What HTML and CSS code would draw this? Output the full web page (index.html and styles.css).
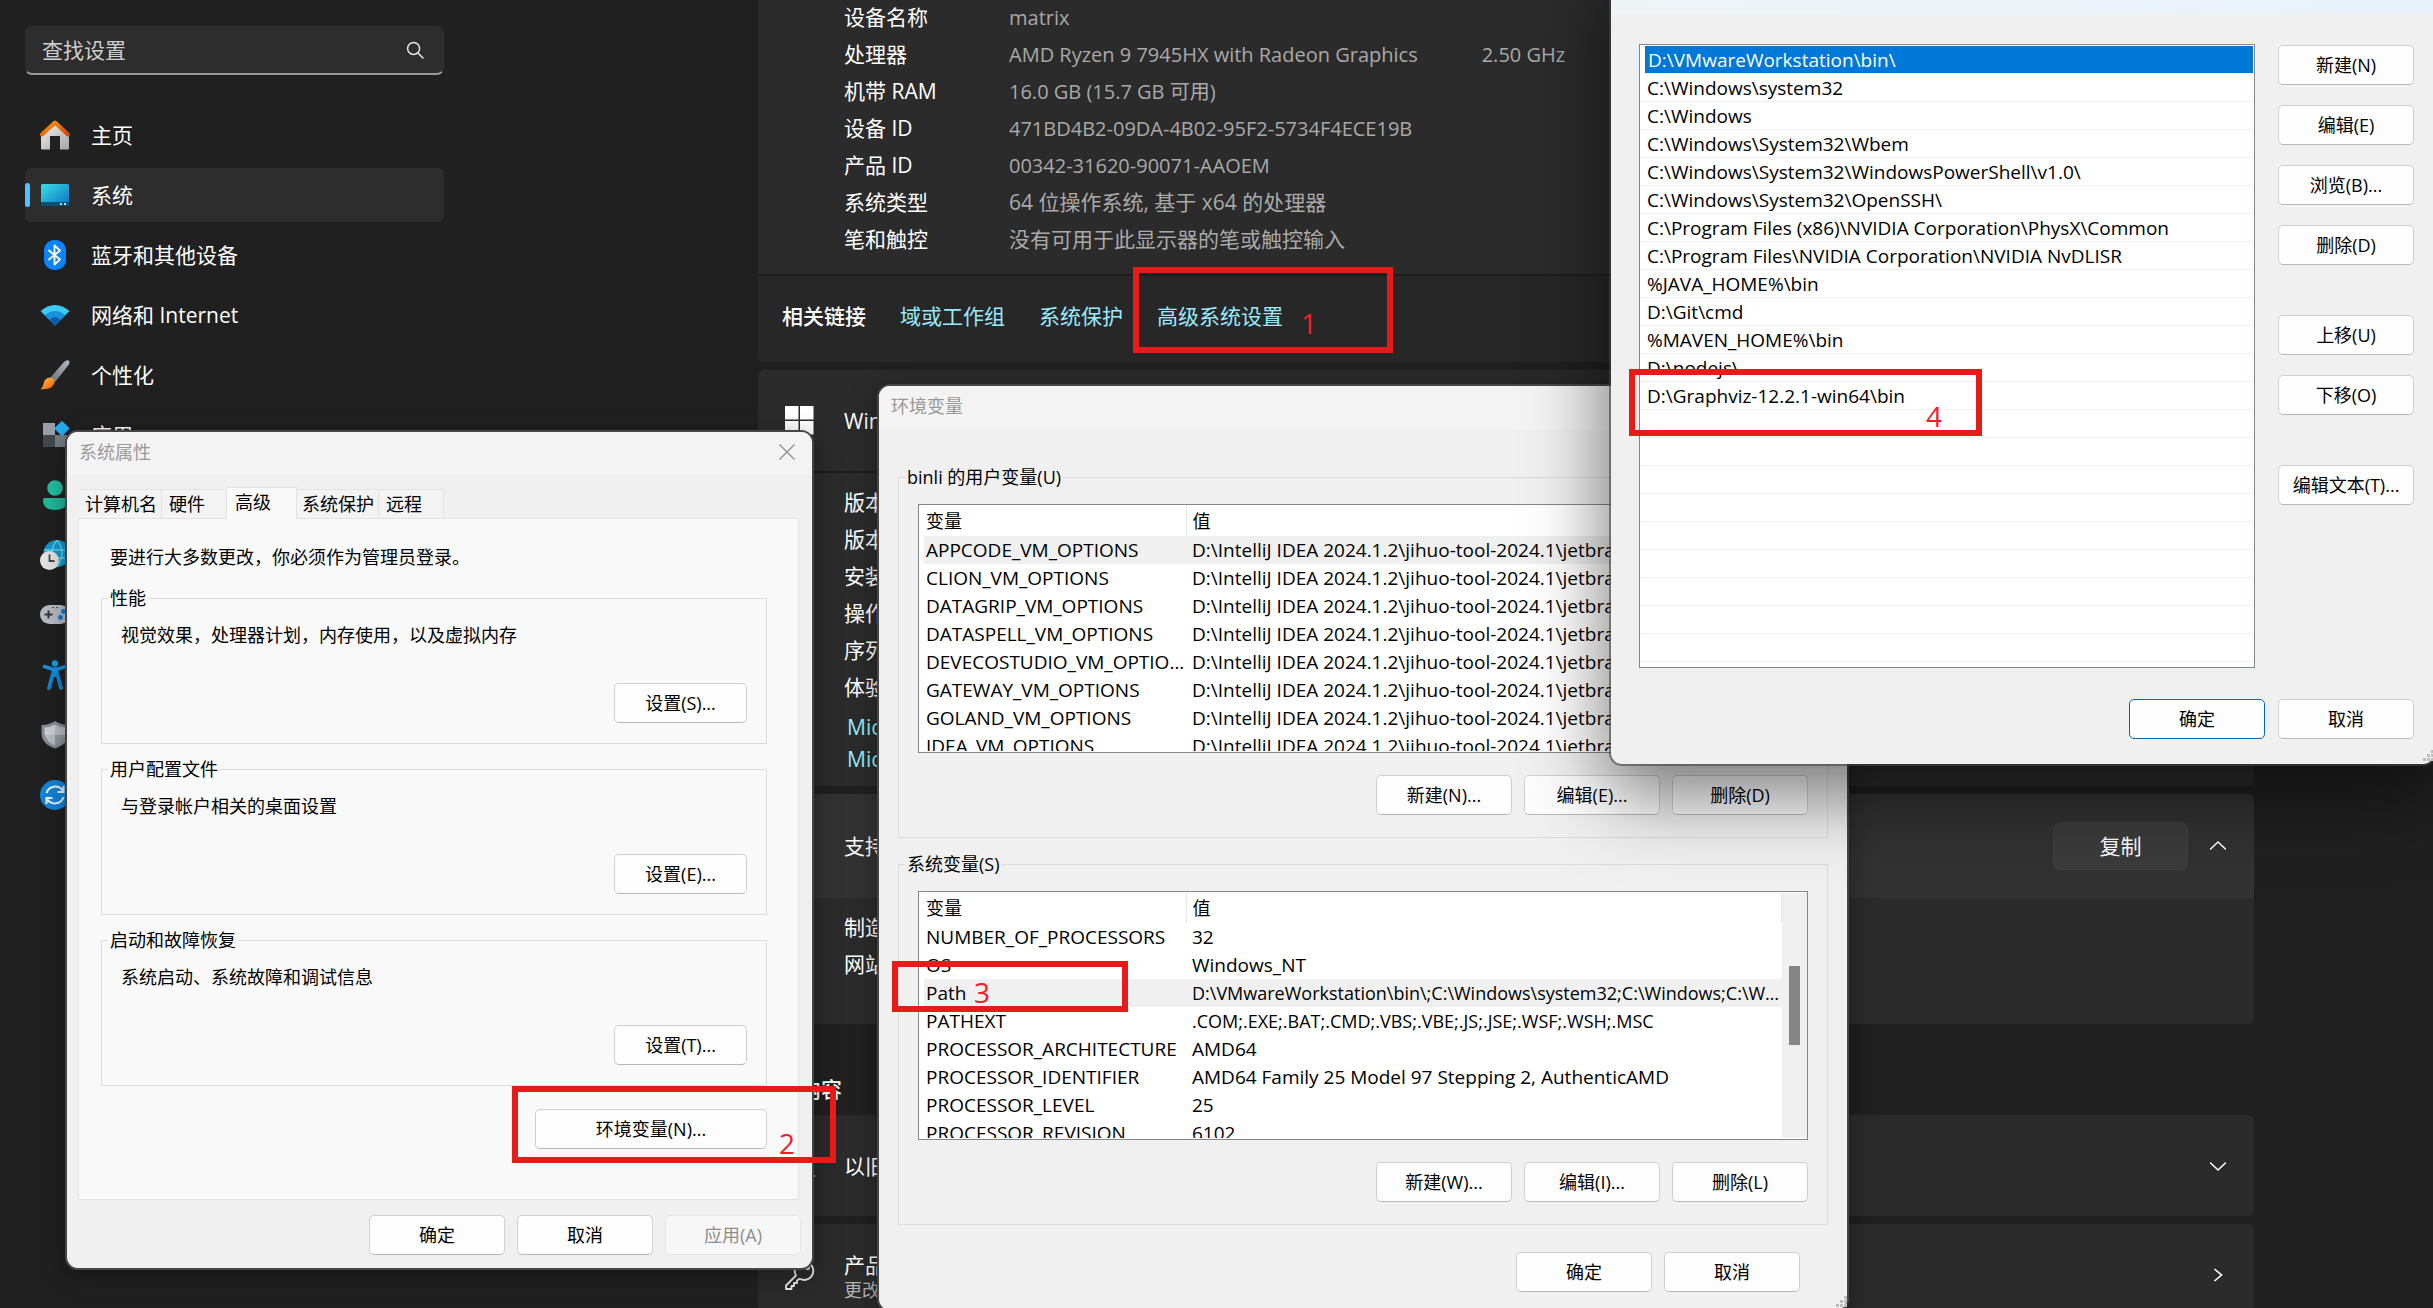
FILE: index.html
```html
<!DOCTYPE html>
<html lang="zh-CN">
<head>
<meta charset="utf-8">
<title>系统 - 关于</title>
<link rel="stylesheet" href="styles.css">
</head>
<body>
<div class="settings">
  <aside class="sidebar">
    <div class="search">
      <input type="search" placeholder="查找设置" aria-label="查找设置">
      <svg width="18" height="18" viewBox="0 0 18 18" fill="none" stroke="#e6e6e6" stroke-width="1.5" stroke-linecap="round"><circle cx="7.6" cy="7.4" r="6"/><path d="M12 12l5 5"/></svg>
    </div>
    <nav class="nav">
      <a href="#" class="nav-item"><svg class="icon" viewBox="0 0 30 30"><defs><linearGradient id="roof" x1="0" y1="0" x2="1" y2="1"><stop offset="0" stop-color="#ff9b0c"/><stop offset="1" stop-color="#d44505"/></linearGradient><linearGradient id="wall" x1="0" y1="0" x2="1" y2="1"><stop offset="0" stop-color="#efefef"/><stop offset="1" stop-color="#a5a5a5"/></linearGradient></defs><path fill="url(#wall)" d="M15 5L29 16v12.500q0 1-1 1h-8V16H10v13.500H2q-1 0-1-1V16z"/><path fill="none" stroke="url(#roof)" stroke-width="4" stroke-linecap="round" stroke-linejoin="round" d="M2 14.500L15 2.500l13 12"/></svg>主页</a>
      <a href="#" class="nav-item selected" aria-current="page"><svg class="icon" viewBox="0 0 30 30"><defs><linearGradient id="scr" x1="0" y1="0" x2="1" y2="1"><stop offset="0" stop-color="#3be0e6"/><stop offset="1" stop-color="#0a6fc4"/></linearGradient></defs><rect x="1" y="4" width="28" height="22" rx="1.500" fill="url(#scr)"/><path d="M1 22h28v2.500q0 1.500-1.500 1.500h-25Q1 26 1 24.500z" fill="#0b4f73"/><path d="M20 23h2v2h-2zM24 23h2v2h-2z" fill="#b9dcec"/></svg>系统</a>
      <a href="#" class="nav-item"><svg class="icon" viewBox="0 0 30 30"><rect x="4" y="0" width="22" height="30" rx="10" fill="#0a84ff"/><path d="M9 10.500l11 9-5.500 5V5.500l5.500 5-11 9" fill="none" stroke="#fff" stroke-width="1.800" stroke-linejoin="round" stroke-linecap="round"/></svg>蓝牙和其他设备</a>
      <a href="#" class="nav-item"><svg class="icon" viewBox="0 0 30 30"><path d="M.5 11Q15-1 29.500 11L15 25.500z" fill="#3ccbf4"/><path d="M4.800 15.300Q15 6.500 25.200 15.300L15 25.500z" fill="#1590df"/><path d="M9.400 19.900Q15 14 20.600 19.900L15 25.500z" fill="#0f5aa6"/></svg>网络和 Internet</a>
      <a href="#" class="nav-item"><svg class="icon" viewBox="0 0 30 30"><defs><linearGradient id="hnd" x1="0" y1="1" x2="1" y2="0"><stop offset="0" stop-color="#69727b"/><stop offset="1" stop-color="#b4bac1"/></linearGradient><linearGradient id="tip" x1="0" y1="0" x2="1" y2="1"><stop offset="0" stop-color="#ffc43a"/><stop offset="1" stop-color="#f05a14"/></linearGradient></defs><path d="M10 18L24 2q2.500-2.500 4.500-1.500Q30.500 2 28.500 5L15 22z" fill="url(#hnd)"/><path d="M10 17.500q5 .5 4.500 5Q13 30 .5 29.200 3 27.500 3.500 24 4.500 18 10 17.500z" fill="url(#tip)"/></svg>个性化</a>
      <a href="#" class="nav-item"><svg class="icon" viewBox="0 0 30 30"><rect x="3" y="3" width="12" height="12" fill="#9aa1a9"/><rect x="3" y="15" width="12" height="12" fill="#45494d"/><rect x="15" y="15" width="12" height="12" fill="#747c85"/><rect x="16.500" y="3" width="11" height="11" rx="1" fill="#26aef2" transform="rotate(45 22 8.500)"/></svg>应用</a>
      <a href="#" class="nav-item"><svg class="icon" viewBox="0 0 30 30"><circle cx="15" cy="8" r="7.800" fill="#22c0a3"/><path d="M5 18h20q2 0 2 2 0 10-12 10T3 20q0-2 2-2z" fill="#1fb89c"/></svg>帐户</a>
      <a href="#" class="nav-item"><svg class="icon" viewBox="0 0 30 30"><circle cx="17" cy="13.500" r="13.500" fill="#1797cf"/><path d="M4 10h26M4 18h26M17 0q-10 13 0 27M17 0q10 13 0 27" stroke="#5bdcf0" stroke-width="1.300" fill="none"/><circle cx="9.500" cy="20.500" r="9.500" fill="#e4e4e4"/><path d="M9.500 14.500v6.500h5" stroke="#444" stroke-width="1.800" fill="none"/></svg>时间和语言</a>
      <a href="#" class="nav-item"><svg class="icon" viewBox="0 0 30 30"><rect x="0" y="5" width="30" height="19" rx="9.500" fill="#b7bcc3"/><path d="M8.500 10.500v8M4.500 14.500h8" stroke="#34383c" stroke-width="2"/><circle cx="23.500" cy="11.500" r="2.400" fill="#0a78d4"/><circle cx="20.500" cy="17.500" r="2.400" fill="#0a78d4"/><path d="M12 7.500h2M16 7.500h2" stroke="#555" stroke-width="1.200"/></svg>游戏</a>
      <a href="#" class="nav-item"><svg class="icon" viewBox="0 0 30 30"><circle cx="15" cy="3.500" r="3.200" fill="#189be6"/><path d="M4.500 6.500L12 9h6l7.500-2.500" stroke="#1590df" stroke-width="3.600" stroke-linecap="round" fill="none"/><path d="M11.500 8h7v9h-7z" fill="#1590df"/><path d="M12.500 15L9 28M17.500 15L21 28" stroke="#0f86d8" stroke-width="3.800" stroke-linecap="round" fill="none"/></svg>辅助功能</a>
      <a href="#" class="nav-item"><svg class="icon" viewBox="0 0 30 30"><path d="M15 1q6 4 13.500 4v8Q28.500 24 15 28.500 1.500 24 1.500 13V5Q9 5 15 1z" fill="#868c94"/><path d="M15 4.500q5 3 10.500 3V15H15z" fill="#b8bdc3"/><path d="M15 4.500q-5 3-10.500 3V15H15z" fill="#ccd0d5"/><path d="M15 15H4.800Q6.500 22 15 25.500z" fill="#b8bdc3"/><path d="M15 15h10.200Q23.500 22 15 25.500z" fill="#9299a1"/></svg>隐私和安全性</a>
      <a href="#" class="nav-item"><svg class="icon" viewBox="0 0 30 30"><circle cx="15" cy="15" r="15" fill="#1384da"/><path d="M6.500 13a9 9 0 0 1 16-2.500M23.500 17a9 9 0 0 1-16 2.500M23.500 6v6h-6M6.500 24v-6h6" stroke="#eaf4fb" stroke-width="2" fill="none"/></svg>Windows 更新</a>
    </nav>
  </aside>

  <main class="content">
    <section class="card open-top">
      <dl class="specs device">
        <dt>设备名称</dt><dd>matrix</dd>
        <dt>处理器</dt><dd>AMD Ryzen 9 7945HX with Radeon Graphics<span class="clock">2.50 GHz</span></dd>
        <dt>机带 RAM</dt><dd>16.0 GB (15.7 GB 可用)</dd>
        <dt>设备 ID</dt><dd>471BD4B2-09DA-4B02-95F2-5734F4ECE19B</dd>
        <dt>产品 ID</dt><dd>00342-31620-90071-AAOEM</dd>
        <dt>系统类型</dt><dd class="han">64 位操作系统, 基于 x64 的处理器</dd>
        <dt>笔和触控</dt><dd class="han">没有可用于此显示器的笔或触控输入</dd>
      </dl>
      <div class="related">
        <strong>相关链接</strong>
        <a href="#">域或工作组</a>
        <a href="#">系统保护</a>
        <a href="#">高级系统设置</a>
      </div>
    </section>

    <section class="card">
      <header class="card-head">
        <svg class="icon" viewBox="0 0 30 30" fill="#fff"><path d="M0 0h13.500v13.500H0zM15 0h13.500v13.500H15zM0 15h13.500v13.500H0zM15 15h13.500v13.500H15z"/></svg>
        <span>Windows 规格</span>
      </header>
      <div class="card-body">
        <dl class="specs">
          <dt>版本</dt><dd></dd>
          <dt>版本号</dt><dd></dd>
          <dt>安装日期</dt><dd></dd>
          <dt>操作系统版本</dt><dd></dd>
          <dt>序列号</dt><dd></dd>
          <dt>体验</dt><dd></dd>
        </dl>
        <div class="terms">
          <a href="#">Microsoft 服务协议</a>
          <a href="#">Microsoft 软件许可条款</a>
        </div>
      </div>
    </section>

    <section class="card">
      <header class="card-head raised">
        <svg class="icon" viewBox="0 0 30 30" fill="none" stroke="#eee" stroke-width="1.600"><circle cx="14" cy="15" r="13"/><path d="M10 11q0-4 4-4t4 4q0 2-2 3.500T14 18M14 21v2"/></svg>
        <span class="grow">支持</span>
        <button type="button" class="copy">复制</button>
        <svg class="chevron" viewBox="0 0 16 16"><path d="M0 11.500L8 4l8 7.500"/></svg>
      </header>
      <div class="card-body support">
        <dl class="specs">
          <dt>制造商</dt><dd></dd>
          <dt>网站</dt><dd></dd>
        </dl>
      </div>
    </section>

    <h2 class="heading">相关内容</h2>

    <section class="card card-head">
      <svg class="icon" viewBox="0 0 30 30" fill="none" stroke="#eee" stroke-width="1.600"><path d="M4 6h20v14H4zM1 25h29"/></svg>
      <span class="grow">以旧换新或回收电脑</span>
      <svg class="chevron" viewBox="0 0 16 16"><path d="M0 4.500L8 12l8-7.500"/></svg>
    </section>
    <section class="card card-head">
      <svg class="icon" viewBox="0 0 30 30" fill="none" stroke="#eee" stroke-width="1.800" stroke-linejoin="round"><path d="M11 15.500L1 25.500V29h5.500v-3H9v-3h3v-2.500l2.500-1.700Q17 20 20 20a9.300 9.300 0 1 0-9-4.500z"/><circle cx="22.500" cy="7.500" r="1.600"/></svg>
      <span class="grow">产品密钥和激活<small>更改产品密钥或升级 Windows</small></span>
      <svg class="chevron" viewBox="0 0 16 16"><path d="M4.500 2l7 6-7 6"/></svg>
    </section>
  </main>
</div>

<section class="window props" aria-label="系统属性">
  <header class="titlebar">
    <span>系统属性</span>
    <button type="button" class="close" aria-label="关闭"><svg width="16" height="16" viewBox="0 0 16 16" stroke="#8e8e8e" stroke-width="1.300"><path d="M.5.5l15 15M15.500.5l-15 15"/></svg></button>
  </header>
  <div class="props-body">
    <div class="tabs">
      <button type="button" class="tab wide">计算机名</button>
      <button type="button" class="tab">硬件</button>
      <button type="button" class="tab active">高级</button>
      <button type="button" class="tab wide">系统保护</button>
      <button type="button" class="tab">远程</button>
    </div>
    <div class="sheet">
      <p class="note">要进行大多数更改，你必须作为管理员登录。</p>
      <fieldset class="group">
        <legend>性能</legend>
        <div class="option"><p>视觉效果，处理器计划，内存使用，以及虚拟内存</p><button type="button" class="btn">设置(S)...</button></div>
      </fieldset>
      <fieldset class="group">
        <legend>用户配置文件</legend>
        <div class="option"><p>与登录帐户相关的桌面设置</p><button type="button" class="btn">设置(E)...</button></div>
      </fieldset>
      <fieldset class="group">
        <legend>启动和故障恢复</legend>
        <div class="option"><p>系统启动、系统故障和调试信息</p><button type="button" class="btn">设置(T)...</button></div>
      </fieldset>
      <button type="button" class="btn env-btn">环境变量(N)...</button>
    </div>
    <footer class="actions props-actions">
      <button type="button" class="btn">确定</button>
      <button type="button" class="btn">取消</button>
      <button type="button" class="btn" disabled>应用(A)</button>
    </footer>
  </div>
</section>

<section class="window env" aria-label="环境变量">
  <header class="titlebar"><span>环境变量</span></header>
  <div class="env-body">
    <fieldset class="group">
      <legend>binli 的用户变量(U)</legend>
      <div class="vars">
        <div class="list">
          <div class="rows">
          <table>
            <thead><tr><th class="name">变量</th><th>值</th></tr></thead>
            <tbody>
              <tr class="current"><td>APPCODE_VM_OPTIONS</td><td>D:\IntelliJ IDEA 2024.1.2\jihuo-tool-2024.1\jetbra\vmoptions\appcode</td></tr>
              <tr><td>CLION_VM_OPTIONS</td><td>D:\IntelliJ IDEA 2024.1.2\jihuo-tool-2024.1\jetbra\vmoptions\clion</td></tr>
              <tr><td>DATAGRIP_VM_OPTIONS</td><td>D:\IntelliJ IDEA 2024.1.2\jihuo-tool-2024.1\jetbra\vmoptions\datagrip</td></tr>
              <tr><td>DATASPELL_VM_OPTIONS</td><td>D:\IntelliJ IDEA 2024.1.2\jihuo-tool-2024.1\jetbra\vmoptions\dataspell</td></tr>
              <tr><td>DEVECOSTUDIO_VM_OPTIONS</td><td>D:\IntelliJ IDEA 2024.1.2\jihuo-tool-2024.1\jetbra\vmoptions\devecostudio</td></tr>
              <tr><td>GATEWAY_VM_OPTIONS</td><td>D:\IntelliJ IDEA 2024.1.2\jihuo-tool-2024.1\jetbra\vmoptions\gateway</td></tr>
              <tr><td>GOLAND_VM_OPTIONS</td><td>D:\IntelliJ IDEA 2024.1.2\jihuo-tool-2024.1\jetbra\vmoptions\goland</td></tr>
              <tr><td>IDEA_VM_OPTIONS</td><td>D:\IntelliJ IDEA 2024.1.2\jihuo-tool-2024.1\jetbra\vmoptions\idea</td></tr>
            </tbody>
          </table>
          </div>
          <div class="scrollbar"><div class="thumb top"></div></div>
        </div>
        <div class="actions">
          <button type="button" class="btn">新建(N)...</button>
          <button type="button" class="btn">编辑(E)...</button>
          <button type="button" class="btn">删除(D)</button>
        </div>
      </div>
    </fieldset>
    <fieldset class="group">
      <legend>系统变量(S)</legend>
      <div class="vars">
        <div class="list">
          <div class="rows">
          <table>
            <thead><tr><th class="name">变量</th><th>值</th></tr></thead>
            <tbody>
              <tr><td>NUMBER_OF_PROCESSORS</td><td>32</td></tr>
              <tr><td>OS</td><td>Windows_NT</td></tr>
              <tr class="current"><td>Path</td><td class="joined">D:\VMwareWorkstation\bin\;C:\Windows\system32;C:\Windows;C:\Windows\System32\Wbem</td></tr>
              <tr><td>PATHEXT</td><td class="joined">.COM;.EXE;.BAT;.CMD;.VBS;.VBE;.JS;.JSE;.WSF;.WSH;.MSC</td></tr>
              <tr><td>PROCESSOR_ARCHITECTURE</td><td>AMD64</td></tr>
              <tr><td>PROCESSOR_IDENTIFIER</td><td>AMD64 Family 25 Model 97 Stepping 2, AuthenticAMD</td></tr>
              <tr><td>PROCESSOR_LEVEL</td><td>25</td></tr>
              <tr><td>PROCESSOR_REVISION</td><td>6102</td></tr>
            </tbody>
          </table>
          </div>
          <div class="scrollbar"><div class="thumb"></div></div>
        </div>
        <div class="actions">
          <button type="button" class="btn">新建(W)...</button>
          <button type="button" class="btn">编辑(I)...</button>
          <button type="button" class="btn">删除(L)</button>
        </div>
      </div>
    </fieldset>
    <footer class="actions env-actions">
      <button type="button" class="btn">确定</button>
      <button type="button" class="btn">取消</button>
    </footer>
  </div>
  <svg class="grip" width="12" height="12" viewBox="0 0 12 12" fill="#bdbdbd"><path d="M9 0h3v3H9zM5 4h3v3H5zM9 4h3v3H9zM1 8h3v3H1zM5 8h3v3H5zM9 8h3v3H9z"/></svg>
</section>

<section class="window edit" aria-label="编辑环境变量">
  <header class="titlebar"><span>编辑环境变量</span></header>
  <div class="edit-body">
    <ul class="paths">
      <li class="picked">D:\VMwareWorkstation\bin\</li>
      <li>C:\Windows\system32</li>
      <li>C:\Windows</li>
      <li>C:\Windows\System32\Wbem</li>
      <li>C:\Windows\System32\WindowsPowerShell\v1.0\</li>
      <li>C:\Windows\System32\OpenSSH\</li>
      <li>C:\Program Files (x86)\NVIDIA Corporation\PhysX\Common</li>
      <li>C:\Program Files\NVIDIA Corporation\NVIDIA NvDLISR</li>
      <li>%JAVA_HOME%\bin</li>
      <li>D:\Git\cmd</li>
      <li>%MAVEN_HOME%\bin</li>
      <li>D:\nodejs\</li>
      <li>D:\Graphviz-12.2.1-win64\bin</li>
      <li></li><li></li><li></li><li></li><li></li><li></li><li></li><li></li><li></li>
    </ul>
    <div class="side">
      <button type="button" class="btn">新建(N)</button>
      <button type="button" class="btn">编辑(E)</button>
      <button type="button" class="btn">浏览(B)...</button>
      <button type="button" class="btn">删除(D)</button>
      <button type="button" class="btn apart">上移(U)</button>
      <button type="button" class="btn">下移(O)</button>
      <button type="button" class="btn apart">编辑文本(T)...</button>
    </div>
  </div>
  <footer class="actions edit-actions">
    <button type="button" class="btn primary">确定</button>
    <button type="button" class="btn">取消</button>
  </footer>
  <svg class="grip" width="12" height="12" viewBox="0 0 12 12" fill="#bdbdbd"><path d="M9 0h3v3H9zM5 4h3v3H5zM9 4h3v3H9zM1 8h3v3H1zM5 8h3v3H5zM9 8h3v3H9z"/></svg>
</section>

<div class="mark mark-1"><span>1</span></div>
<div class="mark mark-2"><span>2</span></div>
<div class="mark mark-3"><span>3</span></div>
<div class="mark mark-4"><span>4</span></div>
</body>
</html>
```
FILE: styles.css
```css
*, *::before, *::after { box-sizing: border-box; }

body {
  margin: 0;
  position: relative;
  height: 100vh;
  overflow: hidden;
  background: #202020;
  color: #fff;
  font: 18px/24px "Open Sans", "Noto Sans CJK SC", sans-serif;
}

p, dl, dd, ul, h2 { margin: 0; padding: 0; }
button, input { font: inherit; color: inherit; }
a { color: #99ebff; text-decoration: none; }

/* Settings app */
.settings {
  display: flex;
  height: 100%;
  overflow: hidden;
  font-size: 21px;
  line-height: 30px;
}

.sidebar {
  flex: none;
  width: 444px;
  padding: 26px 0 0 25px;
}

.search {
  display: flex;
  align-items: center;
  height: 49px;
  padding: 0 19px 0 16px;
  background: #2d2d2d;
  border: 1px solid #303030;
  border-bottom: 2px solid #9a9a9a;
  border-radius: 7px;
}
.search input {
  flex: 1;
  min-width: 0;
  padding: 0;
  border: 0;
  outline: 0;
  background: none;
  appearance: none;
}
.search input::placeholder { color: #cfcfcf; opacity: 1; }

.nav {
  display: flex;
  flex-direction: column;
  gap: 6px;
  margin-top: 33px;
}
.nav-item {
  position: relative;
  flex: none;
  display: flex;
  align-items: center;
  gap: 21px;
  height: 54px;
  padding-left: 15px;
  border-radius: 6px;
  color: #fff;
}
.nav-item.selected { background: #2d2d2d; }
.nav-item.selected::before {
  content: "";
  position: absolute;
  left: 0;
  top: 15px;
  width: 5px;
  height: 24px;
  border-radius: 3px;
  background: #4cc2ff;
}
.icon { flex: none; width: 30px; height: 30px; }

.content {
  flex: 1;
  min-width: 0;
  padding: 0 179px 0 314px;
}
.card {
  margin-bottom: 8px;
  background: #2b2b2b;
  border-radius: 6px;
  overflow: hidden;
}
.open-top { border-radius: 0 0 6px 6px; }

.specs {
  display: grid;
  grid-template-columns: 165px 1fr;
  grid-auto-rows: 37px;
  align-items: start;
  padding-left: 86px;
  line-height: 35px;
  white-space: nowrap;
}
.specs dd { color: #a9a9a9; font-size: 20px; }
.specs .han { font-size: 21px; }
.device { padding-bottom: 15px; }
.clock { margin-left: 64px; }

.related {
  display: flex;
  align-items: center;
  gap: 34px;
  height: 88px;
  padding: 0 0 6px 24px;
  background: #272727;
  border-top: 2px solid #1d1d1d;
}
.related strong { font-weight: 500; }

.card-head {
  display: flex;
  align-items: center;
  gap: 29px;
  height: 101px;
  padding: 0 28px 0 27px;
}
.raised { height: 104px; background: #323232; }
.grow { flex: 1; }
.grow small {
  display: block;
  font-size: 18px;
  line-height: 20px;
  color: #b4b4b4;
}
.card-body {
  padding: 12px 0 11px;
  border-top: 2px solid #1d1d1d;
}
.support { padding-bottom: 40px; border-top: 0; }
.terms {
  display: flex;
  flex-direction: column;
  margin: 4px 0 0 89px;
  line-height: 32px;
}
.copy {
  width: 135px;
  height: 48px;
  margin-right: -7px;
  border: 1px solid #404040;
  border-radius: 7px;
  background: #3b3b3b;
}
.chevron {
  flex: none;
  width: 16px;
  height: 16px;
  fill: none;
  stroke: #fff;
  stroke-width: 1.6;
}
.heading {
  padding: 42px 0 11px;
  font-size: 21px;
  line-height: 30px;
  font-weight: 500;
}

/* Classic dialogs */
.window {
  position: absolute;
  background: #f0f0f0;
  color: #000;
  border-radius: 11px;
  box-shadow: 0 0 0 2px #464646, 0 6px 24px 4px rgba(0, 0, 0, .3);
}
.titlebar {
  display: flex;
  align-items: center;
  justify-content: space-between;
  height: 43px;
  padding: 0 17px 3px 12px;
  background: #f3f3f3;
  border-radius: 11px 11px 0 0;
  color: #999;
}
.close {
  display: flex;
  padding: 0;
  border: 0;
  background: none;
}

.btn {
  flex: none;
  width: 136px;
  height: 40px;
  padding: 0;
  border: 1px solid #d0d0d0;
  border-bottom-color: #b8b8b8;
  border-radius: 5px;
  background: #fdfdfd;
  color: #000;
}
.btn:disabled { background: #f7f7f7; border-color: #e6e6e6; color: #8d8d8d; }
.btn.primary { border-color: #0067c0; }

.group {
  min-width: 0;
  margin: 0 0 13px;
  padding: 0;
  border: 1px solid #dcdcdc;
}
.group legend { margin-left: 6px; padding: 0 2px; }

.actions {
  display: flex;
  justify-content: flex-end;
  gap: 12px;
}

.props { left: 67px; top: 432px; width: 745px; }
.props-body { padding: 12px 11px 13px; }
.tabs { display: flex; align-items: flex-end; padding-left: 2px; }
.tab {
  width: 65px;
  height: 29px;
  padding: 0 0 0 7px;
  border: 1px solid #e2e2e2;
  border-bottom: 0;
  border-left-width: 0;
  background: #f3f3f3;
  color: #000;
  text-align: left;
}
.tab.wide { width: 82px; padding-left: 5px; }
.tab.active {
  position: relative;
  width: 70px;
  height: 32px;
  margin-bottom: -1px;
  padding: 0 0 4px 8px;
  background: #f9f9f9;
}
.sheet {
  display: flex;
  flex-direction: column;
  margin-right: 2px;
  padding: 26px 31px 50px 22px;
  border: 1px solid #e2e2e2;
  background: #f9f9f9;
}
.note { margin: 0 0 17px 9px; }
.option {
  display: flex;
  flex-direction: column;
  gap: 36px;
  padding: 13px 19px 20px;
}
.option .btn { align-self: flex-end; width: 133px; }
.sheet .env-btn { align-self: flex-end; width: 232px; margin-top: 10px; }
.props-actions { margin-top: 15px; }

.env { left: 879px; top: 386px; width: 968px; }
.env-body { padding: 36px 19px 18px; }
.env .group { margin-bottom: 14px; }
.vars {
  display: flex;
  flex-direction: column;
  gap: 22px;
  padding: 15px 19px 22px;
}
.list {
  display: flex;
  height: 249px;
  padding: 1px 0 1px 5px;
  overflow: hidden;
  border: 1px solid #828790;
  background: #fff;
}
.rows { flex: 1; min-width: 0; overflow: hidden; }
.list table {
  width: 100%;
  table-layout: fixed;
  border-collapse: collapse;
}
.list th, .list td {
  height: 28px;
  padding: 0 0 0 6px;
  overflow: hidden;
  font-weight: 400;
  text-align: left;
  white-space: nowrap;
  text-overflow: ellipsis;
}
.list td { font-size: 19px; }
.list .joined { font-size: 18px; }
.list th { height: 30px; border-right: 1px solid #e5e5e5; }
.list .name { width: 262px; }
.list th:first-child, .list td:first-child { padding-left: 2px; }
.current { background: #f0f0f0; }
.scrollbar { flex: none; width: 25px; background: #f0f0f0; }
.thumb { width: 11px; height: 79px; margin: 73px 0 0 7px; background: #868686; }
.thumb.top { margin-top: 22px; }
.env-actions { margin-top: 27px; padding-right: 28px; }

.edit {
  left: 1611px;
  top: -29px;
  width: 823px;
  box-shadow: 0 0 0 2px rgba(70, 70, 70, .6), 0 26px 76px 6px rgba(0, 0, 0, .5);
}
.edit .titlebar {
  padding-bottom: 6px;
  background: linear-gradient(90deg, #eef4f6, #e9f1fb);
  color: #000;
}
.edit-body { display: flex; gap: 23px; padding: 30px 20px 0 28px; }
.paths {
  flex: 1;
  height: 624px;
  padding: 1px;
  overflow: hidden;
  border: 1px solid #828790;
  background: #fff;
  list-style: none;
  font-size: 19px;
}
.paths li {
  height: 28px;
  padding-left: 6px;
  border-bottom: 1px solid #eee;
  line-height: 28px;
}
.paths .picked {
  margin-left: 4px;
  padding-left: 3px;
  background: #0078d7;
  color: #fff;
}
.side { display: flex; flex-direction: column; gap: 20px; padding-top: 1px; }
.side .apart { margin-top: 30px; }
.edit-actions { gap: 13px; padding: 31px 20px 25px; }
.grip { position: absolute; right: 0; bottom: 2px; }

/* Numbered step marks */
.mark {
  position: absolute;
  display: flex;
  align-items: flex-end;
  justify-content: flex-end;
  border: 6px solid #e81b1b;
  color: #f0202a;
  font-size: 28px;
  line-height: 28px;
}
.mark-1 { left: 1133px; top: 267px; width: 260px; height: 86px; padding: 0 70px 10px 0; }
.mark-2 { left: 512px; top: 1086px; width: 324px; height: 77px; padding-right: 35px; }
.mark-3 { left: 892px; top: 961px; width: 236px; height: 51px; padding-right: 132px; }
.mark-4 { left: 1629px; top: 369px; width: 353px; height: 67px; padding-right: 34px; }
```
